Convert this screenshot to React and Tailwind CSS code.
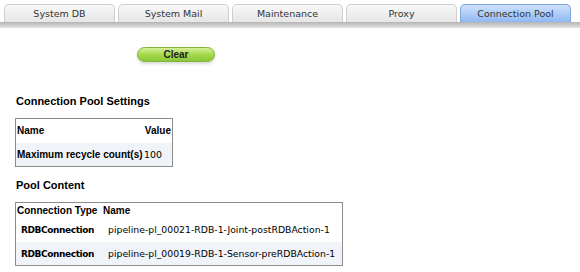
import React from "react";

const tabs = ["System DB", "System Mail", "Maintenance", "Proxy", "Connection Pool"];
const verdana = { fontFamily: "'DejaVu Sans', Verdana, sans-serif" };

export default function App() {
  return (
    <div className="w-[580px] h-[272px] bg-white overflow-hidden" style={{ fontFamily: "'Liberation Sans', Arial, sans-serif" }}>
      <div className="flex gap-[3px] pl-[4px] pt-[4px]">
        {tabs.map((t, i) => (
          <div
            key={t}
            className={
              "w-[111px] h-[18px] rounded-t-[5px] border border-b-0 flex items-center justify-center text-[9.5px] text-[#333] pt-[1px] " +
              (i === 4
                ? "bg-gradient-to-b from-[#cfe2fc] to-[#8fb8f2] border-[#7ea6dc]"
                : "bg-gradient-to-b from-[#f8f8f8] to-[#e6e6e6] border-[#cfcfcf]")
            }
            style={verdana}
          >
            {t}
          </div>
        ))}
      </div>
      <div className="h-[6px] bg-gradient-to-b from-[#b4b4b4] to-[#e4e4e4]" />
      <div className="pl-[137px] pt-[19px]">
        <button className="w-[78px] h-[15px] rounded-full border border-[#7fb33a] bg-gradient-to-b from-[#d6f09a] via-[#a6d94a] to-[#8cc83a] shadow-[0_2px_3px_rgba(0,0,0,0.15)] text-[10px] font-bold text-[#222] flex items-center justify-center leading-none">
          Clear
        </button>
      </div>
      <div className="pl-[15px]">
        <div className="pt-[32px] text-[11px] font-bold text-black leading-[14px] pl-[1px]">Connection Pool Settings</div>
        <div className="mt-[10px] w-[158px] border border-[#8c8c8c] text-[10px] leading-[12px]">
          <div className="h-[24px] flex items-center justify-between px-[1px] font-bold">
            <span>Name</span>
            <span>Value</span>
          </div>
          <div className="h-[23px] flex items-center bg-[#f0f3f8] px-[1px]">
            <span className="font-bold w-[127px]">Maximum recycle count(s)</span>
            <span className="text-[9.5px]" style={verdana}>100</span>
          </div>
        </div>
        <div className="pt-[11px] text-[11px] font-bold text-black leading-[14px] pl-[1px]">Pool Content</div>
        <div className="mt-[10px] w-[328px] border border-[#8c8c8c] text-[10px] leading-[12px]">
          <div className="h-[15px] flex items-center font-bold">
            <span className="w-[86px] pl-[1px]">Connection Type</span>
            <span className="pl-[1px]">Name</span>
          </div>
          <div className="h-[24px] flex items-center text-[9.3px]" style={verdana}>
            <span className="w-[86px] pl-[5px] font-bold text-[9px] tracking-[-0.4px]">RDBConnection</span>
            <span className="pl-[6px]">pipeline-pl_00021-RDB-1-Joint-postRDBAction-1</span>
          </div>
          <div className="h-[23px] flex items-center bg-[#f0f3f8] text-[9.3px]" style={verdana}>
            <span className="w-[86px] pl-[5px] font-bold text-[9px] tracking-[-0.4px]">RDBConnection</span>
            <span className="pl-[6px]">pipeline-pl_00019-RDB-1-Sensor-preRDBAction-1</span>
          </div>
        </div>
      </div>
    </div>
  );
}
